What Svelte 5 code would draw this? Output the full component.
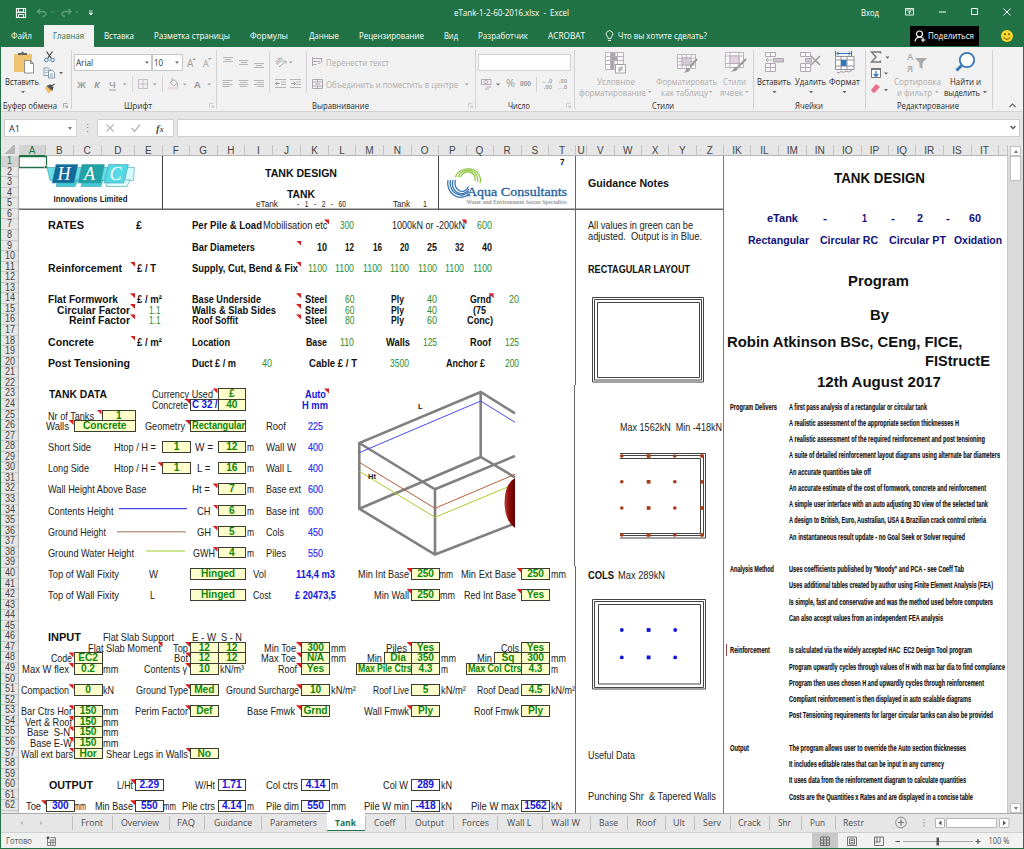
<script>
  // Stretches or narrows a label so that it takes exactly its column share.
  function fit(node, w) {
    const inner = node.firstElementChild;
    const natural = inner.getBoundingClientRect().width;
    if (natural > 0) inner.style.transform = `scaleX(${w / natural})`;
  }

  // Turns [start, end, text, class] spans into flex items with leading gaps.
  function flow(items, origin = 0) {
    let prev = origin;
    return items.map(([a, b, t, c]) => {
      const gap = a - prev;
      prev = b;
      return { gap, w: b - a, t, c: c ?? '' };
    });
  }

  const menu = flow([
    [11, 32, 'Файл'], [53, 84, 'Главная', 'on'], [104, 134, 'Вставка'], [154, 230, 'Разметка страницы'],
    [250, 288, 'Формулы'], [309, 339, 'Данные'], [359, 424, 'Рецензирование'], [444, 458, 'Вид'],
    [478, 528, 'Разработчик'], [548, 585, 'ACROBAT'], [618, 707, 'Что вы хотите сделать?', 'ask']
  ]);

  const groups = [
    { a: 0, b: 71, lines: [[76, [[5, 39, 'Вставить']]], [100, [[3, 57, 'Буфер обмена']]]] },
    { a: 71, b: 217, lines: [[57, [[76, 93, 'Arial'], [154, 163, '10']]], [100, [[124, 152, 'Шрифт']]]] },
    { a: 217, b: 475, lines: [[57, [[326, 389, 'Перенести текст', 'off']]], [79, [[326, 458, 'Объединить и поместить в центре', 'off']]], [100, [[312, 369, 'Выравнивание']]]] },
    { a: 475, b: 574, lines: [[78, [[506, 515, '%', 'off pc'], [520, 531, '000', 'off b']]], [100, [[508, 530, 'Число']]]] },
    { a: 574, b: 753, lines: [[76, [[597, 635, 'Условное', 'off'], [656, 717, 'Форматировать', 'off'], [723, 746, 'Стили', 'off']]], [87, [[579, 646, 'форматирование', 'off'], [661, 708, 'как таблицу', 'off'], [720, 743, 'ячеек', 'off']]], [100, [[652, 674, 'Стили']]]] },
    { a: 753, b: 865, lines: [[76, [[757, 791, 'Вставить'], [795, 826, 'Удалить'], [829, 860, 'Формат']]], [100, [[795, 823, 'Ячейки']]]] },
    { a: 865, b: 992, lines: [[76, [[894, 941, 'Сортировка', 'off'], [950, 981, 'Найти и']]], [87, [[897, 932, 'и фильтр', 'off'], [944, 980, 'выделить']]], [100, [[897, 959, 'Редактирование']]]] }
  ];

  const names = ['A','B','C','D','E','F','G','H','I','J','K','L','M','N','O','P','Q','R','S','T','U','V','W','X','Y','Z','IK','IL','IM','IN','IO','IP','IQ','IR','IS','IT',''];
  const edges = [19,46,73.5,101.5,135,162.5,190,217.5,245,273,301,329,356,384,411.5,439,466.5,493.5,521.5,549,576,587,614.5,642,669,696.5,724,751,779,806.5,834,861.5,888.5,916,943.5,971.5,998.5,1008];
  const heads = names.map((n, i) => ({ n, w: edges[i + 1] - edges[i] }));
  const rowNumbers = Array.from({ length: 62 }, (_, i) => i + 1);

  const mainEdges = edges.slice(0, 21);
  const sideEdges = edges.slice(20, 27);
  const tracks = (e) => e.slice(1).map((v, i) => `${v - e[i]}px`).join(' ');

  function place(x, r, e) {
    let k = 0;
    while (k < e.length - 2 && e[k + 1] <= x) k++;
    return `grid-row:${r};grid-column:${k + 1};margin-left:${x - e[k]}px`;
  }

  const dia = [[317,327,'10'],[345,354,'12'],[373,382,'16'],[400,409,'20'],[427,437,'25'],[455,464,'32'],[482,492,'40']].map((d) => [...d, 'b']);
  const cost = [308,335,363,390,418,445,473].map((x) => [x, x + 19, '1100', 'g']);
  const steel = (s, p) => [[301,0,'','t'],[305,327,'Steel','b'],[344.5,354,s,'g'],[391,404,'Ply','b'],[427,437,p,'g']];
  const size = (v, wall, w, auto) => [[217.5,245,v,'y'],[247,254,'m'],[266,w,wall],[308,323,auto,'u']];
  const F = [217.5,0,'','t'];

  const cells = {
    1: [[560,564.5,'7','b s']],
    2: [[265,337,'TANK DESIGN','b h']],
    4: [[287,315,'TANK','b h']],
    5: [[256,278,'eTank','s'],[297,346,'-   1   -   2   -   60','s'],[393,410,'Tank','s'],[423,427,'1','s']],
    7: [[48,84,'RATES','b h'],[136,142,'£','b'],[192,262,'Per Pile & Load','b'],[262.5,327,'Mobilisation etc'],[329,0,'','t'],[340,354,'300','g'],[392,465,'1000kN or -200kN'],[466.5,0,'','t'],[477,492,'600','g']],
    9: [[192,255,'Bar Diameters','b'],[301,0,'','t'],...dia],
    11: [[48,122,'Reinforcement','b'],[135,0,'','t'],[137,156,'£ / T','b'],[192,298,'Supply, Cut, Bend & Fix','b'],[301,0,'','t'],...cost],
    14: [[48,118,'Flat Formwork','b'],[135,0,'','t'],[137,162,'£ / m²','b'],[192,261,'Base Underside','b'],...steel('60','40'),[470,491,'Grnd','b'],[493.5,0,'','t'],[509,519,'20','g']],
    15: [[57,130,'Circular Factor','b'],[135,0,'','t'],[149,160.5,'1.1','g'],[192,276,'Walls & Slab Sides','b'],...steel('60','40'),[473,486,'(75','b']],
    16: [[69,130,'Reinf Factor','b'],[135,0,'','t'],[149,160.5,'1.1','g'],[192,238,'Roof Soffit','b'],...steel('80','60'),[467,493,'Conc)','b']],
    18: [[48,94,'Concrete','b'],[135,0,'','t'],[137,162,'£ / m²','b'],[192,230,'Location','b'],[306,327,'Base','b'],[340,354,'110','g'],[386,410,'Walls','b'],[423,437,'125','g'],[470,491,'Roof','b'],[505,519,'125','g']],
    20: [[48,130,'Post Tensioning','b'],[192,236,'Duct £ / m','b'],[262,272,'40','g'],[309,357,'Cable £ / T','b'],[390,409,'3500','g'],[446,485,'Anchor £','b'],[505,519,'200','g']],
    23: [[49,107,'TANK DATA','b h'],[152,213,'Currency Used'],F,[217.5,245,'£','y'],[305,326,'Auto','b bl'],[329,0,'','t']],
    24: [[152,188,'Concrete'],[190,0,'','t'],[190,217.5,'C 32 /','o'],[217.5,245,'40','y']  ,[302,328,'H mm','b bl']],
    25: [[48,94,'Nr of Tanks'],[101.5,0,'','t'],[101.5,135,'1','y']],
    26: [[46,69,'Walls'],[73.5,0,'','t'],[73.5,135,'Concrete','y'],[145,185,'Geometry'],[190,0,'','t'],[190,245,'Rectangular','y'],[266,286,'Roof'],[308,323,'225','u']],
    28: [[48,91,'Short Side'],[114,156,'Htop / H ='],[162,190,'1','y'],[195,213,'W ='],...size('12','Wall W',296,'400')],
    30: [[48,89,'Long Side'],[114,156,'Htop / H ='],[162.5,0,'','t'],[162,190,'1','y'],[197,210.5,'L ='],...size('16','Wall L',292,'400')],
    32: [[48,146.5,'Wall Height Above Base'],[192,210,'Ht ='],F,...size('7','Base ext',301,'600')],
    34: [[48,113.5,'Contents Height'],[197,210.5,'CH'],F,...size('6','Base int',299,'600')],
    36: [[48,106,'Ground Height'],[197,211,'GH'],F,...size('5','Cols',284,'450')],
    38: [[48,134,'Ground Water Height'],[193,215,'GWH'],F,...size('4','Piles',286,'550')],
    40: [[48,119,'Top of Wall Fixity'],[149,158,'W'],[190,245,'Hinged','y'],[253,266,'Vol'],[296,335,'114,4 m3','b bl'],[358,409,'Min Int Base'],[411.5,0,'','t'],[411,439,'250','y'],[439,453,'mm'],[461,516,'Min Ext Base'],[521.5,0,'','t'],[521,549,'250','y'],[551,566,'mm']],
    42: [[48,119,'Top of Wall Fixity'],[150,155,'L'],[190,245,'Hinged','y'],[253,271,'Cost'],[295,336,'£ 20473,5','b bl'],[374,409,'Min Wall'],[411.5,0,'','t'],[411,439,'250','y'],[440,455,'mm'],[464,516,'Red Int Base'],[521.5,0,'','t'],[521,549,'Yes','y']],
    46: [[48,81,'INPUT','b h'],[103,174,'Flat Slab Support'],[192,216,'E - W'],[221,242,'S - N']],
    47: [[88,161,'Flat Slab Moment'],[162.5,0,'','t'],[173,188,'Top'],[190,0,'','t'],[190,217.5,'12','y'],[217.5,245,'12','y'],[264,296,'Min Toe'],[301,0,'','t'],[301,329,'300','y'],[331,346,'mm'],[386,407,'Piles'],[411.5,0,'','t'],[411,439,'Yes','y'],[501,519,'Cols'],[521,549,'Yes','y']],
    48: [[51,72,'Code'],[73.5,0,'','t'],[73.5,101.5,'EC2','y'],[174,188,'Bot'],[190,0,'','t'],[190,217.5,'12','y'],[217.5,245,'12','y'],[261,296,'Max Toe'],[301,0,'','t'],[301,329,'N/A','y'],[331,346,'mm'],[367,382,'Min'],[383.5,411.5,'Dia','y'],[411,439,'350','y'],[441,456,'mm'],[477,492,'Min'],[493.5,521.5,'Sq','y'],[521,549,'300','y'],[551,566,'mm']],
    49: [[22,69,'Max W flex'],[73.5,0,'','t'],[73.5,101.5,'0.2','y'],[103,118.5,'mm'],[144,187,'Contents γ'],[190,0,'','t'],[190,217.5,'10','y'],[220,244,'kN/m³'],[278,297,'Roof'],[301,0,'','t'],[301,329,'Yes','y'],[356,411.5,'Max Pile Ctrs','y'],[411,439,'4.3','y'],[441,448,'m'],[466,521.5,'Max Col Ctrs','y'],[521,549,'4.3','y'],[551,558,'m']],
    51: [[21,69,'Compaction'],[73.5,0,'','t'],[73.5,101.5,'0','y'],[103,114,'kN'],[136,188,'Ground Type'],[190,0,'','t'],[190,217.5,'Med','y'],[226,299,'Ground Surcharge'],[301,0,'','t'],[301,329,'10','y'],[331,356,'kN/m²'],[373,409,'Roof Live'],[411,439,'5','y'],[441,466,'kN/m²'],[477,519,'Roof Dead'],[521,549,'4.5','y'],[551,575,'kN/m²']],
    53: [[21,72,'Bar Ctrs Hor'],[73.5,0,'','t'],[73.5,101.5,'150','y'],[103,118.5,'mm'],[135,188,'Perim Factor'],[190,0,'','t'],[190,217.5,'Def','y'],[247,295,'Base Fmwk'],[301,0,'','t'],[301,329,'Grnd','y'],[364,409,'Wall Fmwk'],[411.5,0,'','t'],[411,439,'Ply','y'],[474,519,'Roof Fmwk'],[521,549,'Ply','y']],
    54: [[25,72,'Vert & Roof'],[73.5,0,'','t'],[73.5,101.5,'150','y'],[103,118.5,'mm']],
    55: [[27,70,'Base  S-N'],[73.5,0,'','t'],[73.5,101.5,'150','y'],[103,118.5,'mm']],
    56: [[30,72,'Base E-W'],[73.5,0,'','t'],[73.5,101.5,'150','y'],[103,118.5,'mm']],
    57: [[21,73,'Wall ext bars'],[73.5,0,'','t'],[73.5,101.5,'Hor','y'],[106,188,'Shear Legs in Walls'],[190,0,'','t'],[190,217.5,'No','y']],
    60: [[49,93,'OUTPUT','b h'],[117,133,'L/Ht'],[135,0,'','t'],[135,162.5,'2.29','o'],[195,215,'W/Ht'],[217.5,245,'1.71','o'],[266,298,'Col ctrs'],[301,329,'4.14','o'],[331,338,'m'],[383,408,'Col W'],[411,439,'289','o'],[441,452,'kN']],
    62: [[26,41,'Toe'],[46,0,'','t'],[46,73.5,'300','o'],[74,86,'mm'],[95,133,'Min Base'],[135,0,'','t'],[135,162.5,'550','o'],[163,176,'mm'],[182,215,'Pile ctrs'],[217.5,245,'4.14','o'],[247,254,'m'],[266,299,'Pile dim'],[301,329,'550','o'],[331,346,'mm'],[364,409,'Pile W min'],[411,439,'-418','o'],[441,452,'kN'],[471,519,'Pile W max'],[521,549,'1562','o'],[551,562,'kN']]
  };

  const side = {
    3: [[588,669,'Guidance Notes','b']],
    7: [[588,693,'All values in green can be','']],
    8: [[588,702,'adjusted.  Output is in Blue.','']],
    11: [[588,690,'RECTAGULAR LAYOUT','b low']],
    26: [[620,722,'Max 1562kN  Min -418kN','low']],
    40: [[588,614,'COLS','b low'],[618,665,'Max 289kN','low']],
    57: [[588,635,'Useful Data','low']],
    61: [[588,716,'Punching Shr  & Tapered Walls','']]
  };

  const titles = [
    [13, 19, [[834,925,'TANK DESIGN']], 't15'],
    [53, 18, [[767,798,'eTank'],[823,827,'-'],[862,867,'1'],[891,895,'-'],[917,923,'2'],[946,950,'-'],[969,981,'60']], 'navy'],
    [75, 18, [[748,809,'Rectangular'],[820,878,'Circular RC'],[889,946,'Circular PT'],[954,1002,'Oxidation']], 'navy'],
    [115, 20, [[848,909,'Program']], 't15'],
    [149, 20, [[870,889,'By']], 't15'],
    [177, 19, [[726.5,962,'Robin Atkinson BSc, CEng, FICE,']], 't15'],
    [196, 19, [[925,990,'FIStructE']], 't15'],
    [216, 20, [[817,941,'12th August 2017']], 't15']
  ];
  const titleRows = titles.map(([y, h, items, c], i) => ({ gap: i ? y - titles[i - 1][0] - titles[i - 1][1] : y, h, c, items: flow(items, 724) }));

  const notes = [
    ['Program Delivers', 47, 'A first pass analysis of a rectangular or circular tank', 138],
    ['', 0, 'A realistic assessment of the appropriate section thicknesses H', 170],
    ['', 0, 'A realistic assessment of the required reinforcement and post tensioning', 196],
    ['', 0, 'A suite of detailed reinforcement layout diagrams using alternate bar diameters', 211],
    ['', 0, 'An accurate quantities take off', 82],
    ['', 0, 'An accurate estimate of the cost of formwork, concrete and reinforcement', 197],
    ['', 0, 'A simple user interface with an auto adjusting 3D view of the selected tank', 199],
    ['', 0, 'A design to British, Euro, Australian, USA & Brazilian crack control criteria', 197],
    ['', 0, 'An instantaneous result update - no Goal Seek or Solver required', 176],
    ['', 0, '', 0],
    ['Analysis Method', 44, 'Uses coefficients published by "Moody" and PCA - see Coeff Tab', 175],
    ['', 0, 'Uses additional tables created by author using Finite Element Analysis (FEA)', 204],
    ['', 0, 'Is simple, fast and conservative and was the method used before computers', 204],
    ['', 0, 'Can also accept values from an independent FEA analysis', 154],
    ['', 0, '', 0],
    ['Reinforcement', 40, 'Is calculated via the widely accepted HAC  EC2 Design Tool program', 183],
    ['', 0, 'Program upwardly cycles through values of H with max bar dia to find compliance', 216],
    ['', 0, 'Program then uses chosen H and upwardly cycles through reinforcement', 195],
    ['', 0, 'Compliant reinforcement is then displayed in auto scalable diagrams', 182],
    ['', 0, 'Post Tensioning requirements for larger circular tanks can also be provided', 204],
    ['', 0, '', 0],
    ['Output', 19, 'The program allows user to override the Auto section thicknesses', 177],
    ['', 0, 'It includes editable rates that can be input in any currency', 155],
    ['', 0, 'It uses data from the reinforcement diagram to calculate quantities', 177],
    ['', 0, 'Costs are the Quantities x Rates and are displayed in a concise table', 184]
  ];

  const sheetTabs = [
    ['Front',71.5,111.5,22],['Overview',111.5,168.5,38],['FAQ',168.5,204,18],['Guidance',204,261,38],['Parameters',261,326.5,47],
    ['Tank',326.5,364.5,21],['Coeff',364.5,405,21.5],['Output',405,453,29],['Forces',453,497,27],['Wall L',497,541.5,24.5],['Wall W',541.5,590,29],
    ['Base',590,627,19],['Roof',627,664.5,20],['Ult',664.5,693.5,12],['Serv',693.5,730,18],['Crack',730,769,23],['Shr',769,800.5,13],['Pun',800.5,834.5,15],['Restr',834.5,873,21]
  ];
</script>

{#snippet fitted(t, w, c)}
  <span class="fit {c}" style="width:{w}px" use:fit={w}><span>{t}</span></span>
{/snippet}

{#snippet sheetCells(data, e)}
  {#each Object.entries(data) as [r, list]}
    {#each list as [a, b, t, c]}
      {#if c === 't'}
        <i class="tri" style={place(a - 5, r, e)}></i>
      {:else if c === 'y' || c === 'o'}
        <div class="box {c}" style="{place(a, r, e)};width:{b - a + 1}px">{#if t.length > 10 || t === 'C 32 /'}{@render fitted(t, b - a - 2, '')}{:else}<span>{t}</span>{/if}</div>
      {:else}
        <div class="cell {c ?? ''}" style={place(a, r, e)}>{@render fitted(t, b - a, '')}</div>
      {/if}
    {/each}
  {/each}
{/snippet}

<div class="window">
  <header class="title">
    <svg class="quick" width="110" height="25" viewBox="0 0 110 25" fill="none">
      <path d="M16.500 8.500h9v9h-9z" stroke="#fff" stroke-width="1.200" /><path d="M18.500 8.500v3.500h5V8.500M18.500 17.500v-3h5v3" stroke="#fff" /><path d="M17 12.500h8" stroke="#fff" />
      <g stroke="#5f9e78" stroke-width="1.300"><path d="M40 9l-2.500 2.500L40 14M37.500 11.500h5.500q3 .5 3 2.500t-3.500 2.500" /><path d="M68.500 9l2.500 2.500-2.500 2.500M71 11.500h-6q-3 .5-3 2.500t3 2.500" /></g>
      <path d="M51 11.500h3l-1.500 1.800zM75.500 11.500h3l-1.500 1.800z" fill="#5f9e78" /><path d="M89 11h3.500M89 13h3.500l-1.700 2z" stroke="#fff" stroke-width=".8" fill="#fff" />
    </svg>
    <div class="doc">{@render fitted('eTank-1-2-60-2016.xlsx  -  Excel', 115, '')}</div>
    <div class="login">{@render fitted('Вход', 18, '')}</div>
    <svg width="144" height="25" viewBox="880 0 144 25" fill="none" stroke="#fff">
      <path d="M905.500 8.500h8v6.500h-8zM905 10h9M909.500 14v-3M908 12.500l1.500-1.500 1.500 1.500" stroke-width=".9" /><path d="M939 12h7" /><path d="M971.500 8.500h6v6h-6z" /><path d="M1003.500 8.500l7 7M1010.500 8.500l-7 7" />
    </svg>
  </header>
  <nav class="menu">
    <div class="items">
      {#each menu as m}<div class="item {m.c}" style="margin-left:{m.gap}px">
        {#if m.c === 'ask'}<svg class="bulb" width="9" height="14" viewBox="0 0 9 14" fill="none" stroke="#e4efe8"><path d="M3 9.500q0-1.500-1-2.300a3.300 3.300 0 1 1 5 0q-1 .8-1 2.300zM3 11.500h3" /></svg>{/if}
        {@render fitted(m.t, m.w, '')}</div>{/each}
    </div>
    <div class="share">
      <svg width="12" height="12" viewBox="0 0 12 12" fill="none" stroke="#fff" stroke-width="1.200"><circle cx="5.500" cy="4" r="3" /><path d="M1 11.500q.5-4 4.500-4.500 1.500 0 2.500.8M9 7.500v4.500M7 10h4.500" /></svg>
      {@render fitted('Поделиться', 46, '')}
    </div>
    <svg class="smile" width="14" height="14" viewBox="0 0 14 14"><circle cx="7" cy="7" r="6" fill="#fbd92c" /><g fill="#6b4b07"><circle cx="5" cy="5.300" r="1" /><circle cx="9" cy="5.300" r="1" /></g><path d="M3.500 8.300q3.500 4 7 0" fill="none" stroke="#6b4b07" /></svg>
  </nav>

  <section class="ribbon">
    <svg class="art" width="1024" height="65" viewBox="0 47 1024 65" fill="none">
      <g stroke="#d2d2d2"><path d="M71.500 50v59M216.500 50v59M475.500 50v59M574.500 50v59M753.500 50v59M865.500 50v59M992.500 50v59M132.500 76v16M162.500 76v16M269.500 51v42M306.500 51v42M536.500 77v15M0 111.500h1024" /></g>
      <path d="M14 54h18v18H14z" fill="#eec471" /><path d="M18 55v-2h3q1.500-3 3 0h3v2z" fill="#666" /><path d="M24.500 60.500h6l3 3v9.500h-9zM30.500 60.500v3h3" fill="#fff" stroke="#777" stroke-width=".8" />
      <path d="M21 91h4l-2 2.300z" fill="#666" />
      <path d="M46.500 51.500l5 7M52.500 51.500l-5 7" stroke="#444" stroke-width="1.200" /><g stroke="#4a7fb5"><circle cx="46.500" cy="60" r="1.800" /><circle cx="52.500" cy="60" r="1.800" /></g>
      <g fill="#fff" stroke="#667d92" stroke-width=".8"><path d="M44 68h4.500l2 2v5.500H44z" /><path d="M48.500 70.500h4l2 2v5.500h-6zM50 74h3M50 76h3M45.500 70.500h2M45.500 72.500h2" /></g><path d="M59 72h4l-2 2.300z" fill="#666" />
      <path d="M44.500 87.500l4-1.500 3.500 4-3.500 3.500z" fill="#efbd66" /><path d="M47.500 86l3-1 2.500 2.500-1 2.500zM51.500 86l3-2" stroke="#555" fill="#555" stroke-width="1.200" />
      <g stroke="#c6c6c6" fill="#fff"><path d="M74.500 54.500h77v16h-77zM152.500 54.500h30v16h-30z" /></g><path d="M145 61.500h4l-2 2.300zM175 61.500h4l-2 2.300z" fill="#666" />
      <g fill="#9e9e9e" font-family="Open Sans" font-size="10"><text x="187" y="67">A</text><text x="203" y="67" font-size="9">A</text><path d="M192.500 60l1.700-2 1.700 2zM208 58h3.500l-1.700 2z" />
        <text x="77" y="88" font-weight="700" font-size="9.500">Ж</text><text x="94" y="88" font-weight="700" font-style="italic" font-size="9.500">К</text><text x="109" y="88" font-weight="600" font-size="9.500">Ч</text><text x="194" y="88" font-weight="700" font-size="9.500">A</text>
        <path d="M109 89.500h7v1h-7zM123 83.500h3.500l-1.700 2zM153 83.500h3.500l-1.700 2zM183 83.500h3.500l-1.700 2zM207.500 83.500h3.500l-1.700 2zM289 61.500h3.500l-1.700 2zM465 83.500h3.500l-1.700 2zM563.500 61.500h3.500l-1.700 2z" /></g>
      <path d="M138.500 79.500h9v9h-9zM143 79.500v9M138.500 84h9" stroke="#cbbcca" /><path d="M170 82.500l4-3 3.500 3.500-4 3zM172 78v3M177.500 83.500v3" stroke="#aaa" /><path d="M167.500 87h11v2.500h-11z" fill="#ead7e4" />
      <path d="M223 57.500h10M225 59.500h6M223 61.500h10M239 60.500h9M241 62.500h6M239 64.500h9M254 63.500h10M256 65.500h6M254 67.500h10M222.500 80.500h10M222.500 82.500h7M222.500 84.500h10M222.500 86.500h7M238.500 80.500h10M240 82.500h7M238.500 84.500h10M240 86.500h7M254 80.500h10M257 82.500h7M254 84.500h10M257 86.500h7M275 79.500h11M281 82h5M281 84.500h5M275 87.500h11M290 79.500h11M296 82h5M296 84.500h5M290 87.500h11" stroke="#b5b5b5" />
      <path d="M280 83.500h-4m1.500-1.800l-2 1.800 2 1.800M291 83.500h4m-1.500-1.800l2 1.800-2 1.800" stroke="#999" />
      <text x="0" y="0" transform="translate(277 65) rotate(-40)" font-size="7" font-family="Open Sans" fill="#888">ab</text><path d="M279 67l7-6m-3 .2h3v2.500" stroke="#aaa" />
      <g stroke="#b0a8b0"><path d="M312.500 58.500h10M312.500 61.500h7.500M312.500 64.500h4M312.500 57v9M321 59q2.500 4-3 4.500M312.500 79.500h10v9h-10zM312.500 82h10M312.500 86h10M317.500 79.500v2.500M317.500 86v2.500M315 84h5" /></g>
      <path d="M478.500 54.500h92v16h-92z" fill="#fff" stroke="#d0d0d0" /><path d="M481.500 79.500h9.500v5h-9.500zM484 82a2 1.500 0 1 0 4 0a2 1.500 0 1 0-4 0M486 87h5M485 89h4" stroke="#b3aab3" /><path d="M496 83.500h4l-2 2.300z" fill="#777" />
      <g fill="#999" font-family="Open Sans" font-size="5.500" font-weight="600"><text x="542" y="82.500">←,0</text><text x="544" y="88.500">,00</text><text x="559" y="82.500">,00</text><text x="557" y="88.500">→,0</text></g>
      <g stroke="#b5abb7" stroke-width=".9"><path d="M605.500 52.500h18v17h-18zM605.500 56.500h18M605.500 60.500h18M605.500 64.500h18M610.500 52.500v17M617.500 52.500v17" fill="#fafafa" /><path d="M611 53h4v3.500h-4zM611 57h6v3.500h-6zM611 61h3v8h-3z" fill="#a79fa9" /><path d="M615.500 64.500h10v8.500h-10zM618 68h5M618 70h5M622 66l-3 6" fill="#fff" stroke="#999" />
        <path d="M677.500 54.500h18v14h-18zM677.500 58h18M677.500 61.500h18M677.500 65h18M682 54.500v14M686.500 54.500v14M691 54.500v14" fill="#fafafa" /><path d="M682 58h9v7h-9z" fill="#d5cad7" /><path d="M725.500 52.500h18v15h-18zM725.500 56h18M725.500 63.500h18M730 52.500v15M739 52.500v15" fill="#fafafa" /><path d="M730 56h9v7.500h-9z" fill="#e3d3e1" /></g>
      <path d="M697 59l-7 8M746 59l-8 8" stroke="#999" stroke-width="2" /><path d="M682 72.500q4 0 4-3.500 3-2.500 4 0 0 4-8 3.500zM729 71.500q4 0 5-3.500 3-2.500 4 0 0 4-9 3.500z" fill="#999" />
      <path d="M648 91h3.500l-1.700 2zM709 91h3.500l-1.700 2zM745 91h3.500l-1.700 2zM935 91h3.500l-1.700 2z" fill="#aaa" /><path d="M772.500 91h4l-2 2.300zM809 91h4l-2 2.300zM842.500 91h4l-2 2.300zM983 91h4l-2 2.300zM885.500 56.500h4l-2 2.300zM884 72.500h4l-2 2.300zM884 89h4l-2 2.300z" fill="#666" />
      <g stroke="#aaa3ac" stroke-width=".9" fill="#f8f8f8"><path d="M765.500 52.500h10v4h-10zM770.500 52.500v4M765.500 63.500h10v8h-10zM770.500 63.500v8M765.500 67.500h10" /><path d="M773.500 58.500h10v3.500h-10z" fill="#ccc4ce" /><path d="M772 60h-6m2-2l-2 2 2 2" /><path d="M800.500 52.500h10v4h-10zM805.500 52.500v4M800.500 63.500h10v8h-10zM805.500 63.500v8M800.500 67.500h10" /><path d="M805.500 58.500h6v3.500h-6z" fill="#ccc4ce" /></g><path d="M811 56l9 9M820 56l-9 9" stroke="#a4a0a6" stroke-width="1.700" />
      <path d="M835.500 56.500h18.500v13h-18.500zM835.500 60h18.500M835.500 66h18.500M841 56.500v13M847 56.500v13M837 72.500q3 1 4-1 3 2 5-.5l3 1 3-2" stroke="#8c8691" stroke-width=".9" fill="#fff" /><path d="M841 60h5.500v6h-5.500z" fill="#2f77b8" /><path d="M837 53.500h13m-11.500-1.500l-2 1.500 2 1.500m10-3l2 1.500-2 1.500M835.500 51v5M851.500 51v5" stroke="#3a7abb" />
      <path d="M880.500 53.500v-1.500h-9l4.500 5-4.500 5h9v-1.500" stroke="#777" stroke-width="1.400" /><path d="M871.500 68.500h9v9h-9z" fill="#fff" stroke="#777" /><path d="M871 68h10v2h-10z" fill="#777" /><path d="M876 71v5m-2.300-2l2.300 2.300 2.300-2.300" stroke="#2f77b8" stroke-width="1.300" /><path d="M871 90l5-6 4 3-5 5.500h-2.500z" fill="#e5748b" />
      <g fill="#aaa" font-family="Open Sans" font-size="9.500" font-weight="600"><text x="907" y="60">А</text><text x="907" y="71.500">Я</text></g><path d="M915 58h12l-4.500 5v6l-3-2v-4z" fill="#aaa" />
      <circle cx="967" cy="60" r="7.200" stroke="#3675b5" stroke-width="1.800" fill="#fff" /><path d="M961.500 65.500l-5 5" stroke="#3675b5" stroke-width="2.800" /><path d="M1009.500 107l3-3 3 3" stroke="#666" stroke-width="1.200" />
      <g stroke="#999" stroke-width=".8"><path d="M63.500 107.500v-4h4M65 105l2.500 2.500v-2M67.500 107.500h-2" /><g stroke="#c4c4c4"><path d="M209.500 107.500v-4h4M211 105l2.500 2.500v-2M213.500 107.500h-2M468.500 107.500v-4h4M470 105l2.500 2.500v-2M472.500 107.500h-2M566.500 107.500v-4h4M568 105l2.500 2.500v-2M570.500 107.500h-2" /></g></g>
    </svg>
    <div class="groups">
      {#each groups as g}<div class="group" style="width:{g.b - g.a}px">
        {#each g.lines as [y, items]}<div class="line" style="margin-top:{y - 47}px">
          {#each flow(items, g.a) as i}<div style="margin-left:{i.gap}px">{@render fitted(i.t, i.w, i.c)}</div>{/each}
        </div>{/each}
      </div>{/each}
    </div>
  </section>

  <section class="formula">
    <div class="namebox">{@render fitted('A1', 11, '')}<i class="down"></i></div>
    <div class="grip">⋮</div>
    <svg class="fx" width="77" height="18" viewBox="0 0 77 18" fill="none"><path d="M.5.500h76v17H.5z" fill="#fff" stroke="#cfcfcf" /><path d="M9.500 5.500l7 7M16.500 5.500l-7 7" stroke="#b5b5b5" stroke-width="1.200" /><path d="M34.500 9l3 3.500 5.500-7" stroke="#b5b5b5" stroke-width="1.300" /><text x="59" y="13" font-family="Liberation Serif" font-size="11" font-style="italic" font-weight="700" fill="#555">f<tspan font-size="8">x</tspan></text></svg>
    <div class="entry"><svg width="8" height="6" viewBox="0 0 8 6" fill="none" stroke="#555" stroke-width="1.300"><path d="M1.500 1l2.500 2.500L6.500 1" /></svg></div>
  </section>

  <div class="colheads">
    <div class="corner"></div>
    {#each heads as h}<div class="ch" class:sel={h.n === 'A'} style="width:{h.w}px">{h.n}</div>{/each}
    <div class="up"><i></i></div>
  </div>

  <main>
    <div class="rowheads">{#each rowNumbers as n}<div class:sel={n === 1}>{@render fitted(String(n), n > 9 ? 10 : 5, '')}</div>{/each}</div>
    <div class="pane" style="width:557px;grid-template-columns:{tracks(mainEdges)}">
      {@render sheetCells(cells, mainEdges)}
      <svg class="over" width="558" height="657" viewBox="19 156 558 657" fill="none">
        <path d="M19 209.300h558" stroke="#666" stroke-width="1.500" /><path d="M162.500 156v53M438.500 156v53" stroke="#444" /><path d="M575.500 156v229M574.500 385v181M575.500 566v247" stroke="#666" />
        <path d="M19 156.600h27.500v10.900H19z" stroke="#217346" stroke-width="1.300" /><path d="M44.500 165.500h3v3h-3z" fill="#217346" stroke="#fff" stroke-width=".6" />
        <g stroke="#3b9db0" stroke-width=".6"><path d="M47 167.500h14v13H50zM73 167.500h13l-4 13H73zM98 167.500h12l-3 13h-10z" fill="#69dce6" /><path d="M126 167.500h8.500l-1 13H125z" fill="#d5fbfc" /><path d="M58 180h20l-3 6.500H56zM83 180h20l-2 6.500H81z" fill="#43c9d6" /><path d="M108 180h22l-3 6.500h-21z" fill="#e0fbfc" />
          <path d="M56 164.500h22l-4 18.500H52z" fill="#126a9b" /><path d="M82 164.500h22.500l-4 18.500h-22.500z" fill="#22a3a3" /><path d="M108.500 164.500h20l-5 18.500h-19.500z" fill="#55d9e4" /></g>
        <g fill="#fff" font-family="Liberation Serif" font-style="italic" font-size="18"><text x="57.500" y="180">H</text><text x="84" y="180">A</text><text x="109.500" y="180">C</text></g>
        <text x="53.500" y="201.500" textLength="74" lengthAdjust="spacingAndGlyphs" font-family="Liberation Sans" font-weight="700" font-size="9" fill="#222">Innovations Limited</text>
        <g stroke-width="1.300"><g stroke="#8cc63f"><path d="M455.500 177a12.500 11 0 0 1 24.500 6" /><path d="M458 177a10 9 0 0 1 19.500 5" /><path d="M460.500 177a7.500 7 0 0 1 14.500 4" /></g><g stroke="#3a78b5"><path d="M448 180a13 14 0 0 0 21 14" /><path d="M450.500 180a11 12 0 0 0 18.500 11.500" /><path d="M453 180a9 10 0 0 0 16 9" /><path d="M455.500 180a7 8 0 0 0 13 6.500" /></g></g>
        <text x="467" y="196" textLength="100" lengthAdjust="spacingAndGlyphs" font-family="Liberation Serif" font-size="13.500" fill="#24619f" stroke="#24619f" stroke-width=".3">Aqua Consultants</text>
        <text x="466.500" y="204.300" textLength="100.500" lengthAdjust="spacingAndGlyphs" font-family="Liberation Serif" font-size="5.500" font-weight="700" fill="#999">Water and Environment Sector Specialists</text>
        <path d="M119 508.700h68" stroke="#4545ee" stroke-width="1.200" /><path d="M117 531.700h69" stroke="#c29c88" stroke-width="1.500" /><path d="M146 551h39" stroke="#bede6c" stroke-width="1.500" />
        <g stroke="#808080" stroke-width="2.600"><path d="M515 413.300L480.700 392l-121.400 51v65.700L435 554.500l80-31M480.700 392v65M359.300 508.700L480.700 457 515 477.300M359.300 443L435 489.300 515 456M435 489.300v65" /></g>
        <path d="M359.300 452.700L480.700 401 515 422.300" stroke="#4848ee" /><path d="M359.300 462.300L435 508.300l80-34" stroke="#b4603c" /><path d="M359.300 471.300L435 517.300l80-33.300" stroke="#a8cc28" />
        <defs><linearGradient id="ball"><stop offset="0" stop-color="#b33c34" /><stop offset=".5" stop-color="#8c0a05" /><stop offset="1" stop-color="#5c0000" /></linearGradient></defs><path d="M515 478Q504.500 484 504.500 503 505 521 515 528z" fill="url(#ball)" />
        <g font-family="Liberation Sans" font-size="7.500" font-weight="700" fill="#222"><text x="418" y="409">L</text><text x="368" y="479">Ht</text></g>
      </svg>
    </div>
    <div class="pane" style="width:148px;grid-template-columns:{tracks(sideEdges)}">
      {@render sheetCells(side, sideEdges)}
      <svg class="over" width="148" height="657" viewBox="576 156 148 657" fill="none">
        <path d="M576 209.300h148" stroke="#666" stroke-width="1.500" /><path d="M723.500 156v657" stroke="#777" />
        <g stroke="#444"><path d="M592.500 297.500h111v84.500h-111zM594.500 299.500h107v80.500h-107zM597.500 302.500h102v75h-102z" /><path d="M592.500 599.500h113v89.500h-113zM594.500 601.500h109v86h-109zM598.500 604.500h102v79.500h-102z" /><path d="M620 453.500h85.500v84.500h-85.500M620 455.500h83.500v80h-83.500M620 458.500h80.500v75h-80.500" /></g>
        <g fill="#a83a10">{#each [456, 481.800, 508, 535] as y}<circle cx="621.800" cy={y} r="1.800" /><rect x="646.700" y={y - 1.8} width="3.800" height="3.600" /><circle cx="674.800" cy={y} r="1.800" /><circle cx="702" cy={y} r="1.900" />{/each}</g>
        <g fill="#1212dd">{#each [630, 657.400] as y}<circle cx="621.800" cy={y} r="1.900" /><rect x="646.700" y={y - 1.9} width="3.800" height="3.800" /><circle cx="675.200" cy={y} r="1.900" />{/each}</g>
      </svg>
    </div>
    <div class="info">
      {#each titleRows as t}<div class="trow {t.c}" style="margin-top:{t.gap}px;height:{t.h}px;line-height:{t.h}px">
        {#each t.items as i}<div style="margin-left:{i.gap}px">{@render fitted(i.t, i.w, '')}</div>{/each}
      </div>{/each}
      <div class="notes">
        {#each notes as [k, kw, v, vw]}<div class="note" class:mark={k === 'Reinforcement'}>
          <div class="key">{#if k}{@render fitted(k, kw, '')}{/if}</div>{#if v}{@render fitted(v, vw, '')}{/if}
        </div>{/each}
      </div>
    </div>
    <div class="vscroll"><div class="thumb"></div><div class="dn"><i></i></div></div>
  </main>

  <footer class="tabs">
    <div class="arrows"><i></i><i class="r"></i></div>
    {#each sheetTabs as [t, a, b, w]}<div class="tab" class:active={t === 'Tank'} style="width:{b - a}px">{@render fitted(t, w, '')}</div>{/each}
    <svg class="hbar" width="150" height="19" viewBox="873 813 150 19" fill="none"><circle cx="901" cy="822.500" r="5.300" stroke="#888" /><path d="M898 822.500h6M901 819.500v6" stroke="#777" stroke-width="1.200" /><path d="M924 819v1.500M924 822v1.500M924 825v1.500" stroke="#999" stroke-width="1.200" /><g fill="#fff" stroke="#b5b5b5"><path d="M935.500 818.500h9v9h-9zM946.500 818.500h50v9h-50zM999.500 818.500h9.500v9h-9.500z" /></g><path d="M941.500 820.500v5l-3-2.500zM1003 820.500v5l3-2.500z" fill="#555" /></svg>
  </footer>
  <div class="status">
    <div class="ready">{@render fitted('Готово', 26, '')}</div>
    <svg class="macro" width="10" height="10" viewBox="0 0 10 10" fill="none" stroke="#777"><path d="M1.500 3v6.500h8V1.500H4.500M4.500 4h5M1.500 6.500h8M4.500 3.500v6M7 3.500v6" stroke-width=".9" /><circle cx="2" cy="1.800" r="1.500" fill="#555" stroke="none" /></svg>
    <svg width="210" height="16" viewBox="812 832 210 16" fill="none"><path d="M812 832h26v16h-26z" fill="#c8c8c8" /><g stroke="#666" stroke-width=".9"><path d="M820.500 836h9v8.500h-9zM820.500 839h9M820.500 842h9M823.500 836v8.500M826.500 836v8.500M847.500 836h9v8.500h-9zM849.500 838h5v5h-5zM850.500 839.500h3M850.500 841.500h3M874.500 836h9v8.500h-9zM874.500 841h5.500v-5M877 836v5" /></g><path d="M895.500 840.500h4.500M975.500 840.500h5M978 838v5" stroke="#555" stroke-width="1.200" /><path d="M903 840.500h70" stroke="#aaa" /><path d="M936.500 836.500h2.500v8h-2.500z" fill="#555" /><text x="988.500" y="843.300" textLength="21" lengthAdjust="spacingAndGlyphs" font-family="Open Sans" font-size="8.500" fill="#555">100 %</text></svg>
  </div>
</div>

<style>
  :global(body) { margin: 0; }
  .window { width: 1024px; height: 849px; box-sizing: border-box; overflow: hidden; display: flex; flex-direction: column; background: #e6e6e6; border: solid #217346; border-width: 0 1px 1px 0; font-family: "Open Sans", "Noto Sans", sans-serif; font-size: 9px; color: #2b2b2b; position: relative; }
  .window::before { content: ""; position: absolute; inset: 0 auto 0 0; width: 1px; background: #217346; z-index: 3; }
  .fit { display: block; white-space: pre; flex: none; }
  .fit > span { display: inline-block; transform-origin: 0 50%; white-space: pre; }
  svg { display: block; flex: none; }

  .title { height: 25px; flex: none; background: #217346; display: flex; line-height: 25px; color: #fff; }
  .doc { margin-left: 344px; width: 407px; }
  .login { width: 19px; }
  .title > svg:last-child { margin-right: -1px; }
  .menu { height: 22px; flex: none; background: #217346; display: flex; color: #fff; line-height: 21px; font-size: 9.300px; }
  .items { display: flex; width: 910px; height: 22px; }
  .item { position: relative; }
  .on { color: #217346; background: #f1f1f1; box-shadow: -9px 0 #f1f1f1, 10px 0 #f1f1f1; }
  .bulb { position: absolute; left: -13px; top: 4px; }
  .share { width: 65px; height: 20px; margin-top: .5px; background: #000; display: flex; align-items: center; gap: 2px; padding-left: 4px; color: #fff; }
  .smile { margin: 4px 0 0 21px; }

  .ribbon { height: 65px; flex: none; background: #f1f1f1; display: grid; overflow: hidden; }
  .art, .groups { grid-area: 1 / 1; }
  .groups { display: flex; }
  .group { display: grid; flex: none; align-items: start; }
  .line { grid-area: 1 / 1; display: flex; height: 11px; line-height: 11px; }

  .formula { height: 33px; flex: none; display: flex; padding: 7px 0 0 4px; box-sizing: border-box; }
  .namebox { width: 73px; height: 18px; background: #fff; border: 1px solid #cfcfcf; display: flex; align-items: center; justify-content: space-between; padding-left: 4px; box-sizing: border-box; }
  .down { border: 2.500px solid transparent; border-top: 3px solid #777; border-bottom: 0; margin-right: 4px; }
  .grip { width: 20px; text-align: center; color: #888; line-height: 17px; font-size: 11px; }
  .entry { flex: 1; height: 18px; margin: 0 3px; padding-right: 2px; background: #fff; border: 1px solid #cfcfcf; box-sizing: border-box; display: flex; justify-content: flex-end; align-items: center; }

  .colheads { height: 11px; flex: none; display: flex; font: 10px/11px "Liberation Sans", sans-serif; color: #444; text-align: center; }
  .corner { width: 19px; flex: none; background: linear-gradient(135deg, #e6e6e6 58%, #b5b5b5 58%); background-size: 15px 9px; background-repeat: no-repeat; }
  .ch { flex: none; box-sizing: border-box; border-right: 1px solid #c2c2c2; border-bottom: 1px solid #b5b5b5; }
  .sel { background: #d3d3d3; color: #217346; }
  .ch.sel { border-bottom-color: #217346; }
  .up, .dn { width: 9px; height: 8px; background: #fff; border: 1px solid #c0c0c0; margin: 1px 0 0 2px; display: flex; align-items: center; justify-content: center; }
  .up i { border: 2.500px solid transparent; border-bottom: 3px solid #777; border-top: 0; }
  .dn i { border: 2.500px solid transparent; border-top: 3px solid #777; border-bottom: 0; }

  main { height: 657px; flex: none; display: flex; overflow: hidden; background: #fff; }
  .rowheads { width: 19px; flex: none; box-sizing: border-box; border-right: 1px solid #b5b5b5; background: #e6e6e6; font: 10.400px/10.600px "Liberation Sans", sans-serif; color: #444; }
  .rowheads div { height: 10.574px; box-sizing: border-box; border-bottom: 1px solid #c8c8c8; padding-left: 1px; display: flex; justify-content: center; }
  .pane { flex: none; display: grid; grid-template-rows: repeat(62, 10.574px); position: relative; overflow: hidden; font: 10.800px/12px "Liberation Sans", Arial, sans-serif; color: #222; align-content: start; }
  .over { position: absolute; inset: 0; pointer-events: none; }
  .cell { width: 0; overflow: visible; z-index: 1; }
  .b { font-weight: 700; color: #111; }
  .h { font-size: 11.500px; }
  .s { font-size: 9.300px; }
  .g { color: #2c8c2c; }
  .u { color: #2f2fee; -webkit-text-stroke: .2px #2f2fee; }
  .bl { color: #1515e0; }
  .off { color: #adadad; }
  .off.b { color: #999; font-size: 6.500px; }
  .pc { font-size: 10px; color: #999; }
  .low { transform: translateY(1px); }
  .box { height: 11.600px; box-sizing: border-box; border: 1px solid #3c3c30; display: flex; justify-content: center; overflow: hidden; white-space: pre; font-weight: 700; font-size: 10.200px; line-height: 10.600px; letter-spacing: -.1px; }
  .y { background: #ffffcc; color: #0d860d; }
  .o { background: #fff; color: #1515e0; }
  .tri { width: 5px; height: 5px; background: #d81e1e; clip-path: polygon(0 0, 100% 0, 100% 100%); z-index: 2; }

  .info { width: 284px; flex: none; box-sizing: border-box; border-right: 1px solid #c8c8c8; font-family: "Liberation Sans", Arial, sans-serif; font-weight: 700; color: #111; display: flow-root; }
  .trow { display: flex; }
  .t15 { font-size: 14.800px; }
  .navy { font-size: 10.800px; color: #10107c; }
  .notes { margin-top: 6.500px; font-size: 8.600px; line-height: 16.250px; -webkit-text-stroke: .15px #111; }
  .note { display: flex; height: 16.250px; padding-left: 6px; }
  .mark { background: linear-gradient(#a04848, #a04848) 2px 2px / 1px 12px no-repeat; }
  .key { width: 59px; flex: none; }
  .vscroll { width: 15px; background: #dadada; display: flex; flex-direction: column; justify-content: space-between; }
  .thumb { width: 9px; height: 23px; margin-left: 2px; background: #fff; border: 1px solid #c0c0c0; }

  .tabs { height: 19px; flex: none; display: flex; box-sizing: border-box; border-top: 1px solid #aaa; background: #e6e6e6; line-height: 17px; font-size: 9.300px; color: #4c4c4c; }
  .arrows { width: 71.500px; flex: none; display: flex; gap: 17px; padding: 6.500px 0 0 20px; box-sizing: border-box; }
  .arrows i { height: 0; border: 2.500px solid transparent; border-left: 0; border-right: 3px solid #bbb; }
  .arrows .r { border-right: 0; border-left: 3px solid #bbb; }
  .tab { flex: none; display: flex; justify-content: center; background: linear-gradient(#bdbdbd, #bdbdbd) 0 2px / 1px 14px no-repeat; }
  .tab.active { background: #fff; color: #217346; font-weight: 700; border-bottom: 1.500px solid #217346; margin-top: -1px; height: 17px; line-height: 19px; }
  .hbar { margin-top: -1px; }
  .status { height: 16px; flex: none; background: #f1f1f1; display: flex; border-top: 1px solid #d0d0d0; box-sizing: border-box; line-height: 15px; color: #555; font-size: 8.500px; }
  .ready { margin-left: 5.500px; width: 40.500px; }
  .macro { margin: 3px 756px 0 0; }
</style>
